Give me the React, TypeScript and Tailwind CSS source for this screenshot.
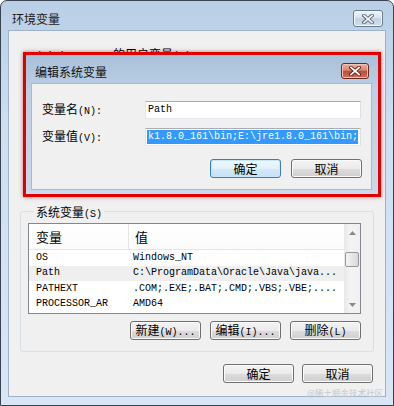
const ui = "font-['Liberation_Mono','Noto_Sans_CJK_SC',monospace]";
const cjk = "font-['Noto_Sans_CJK_SC','Liberation_Sans',sans-serif]";

// cjk text followed by a small half-width mnemonic part, like "新建(W)..."
function Lbl({ zh, en }: { zh: string; en?: string }) {
  return (
    <span className="whitespace-nowrap">
      <span className={`text-[12px] ${cjk}`}>{zh}</span>
      {en ? <span className={`text-[10px] ${ui}`}>{en}</span> : null}
    </span>
  );
}

function Btn({ children, primary = false }: { children: React.ReactNode; primary?: boolean }) {
  return (
    <div
      className={
        primary
          ? "flex h-[19px] w-[71px] items-center justify-center rounded-[3px] border border-[#3c7fb1] bg-[linear-gradient(#eef7fd_0%,#e2f1fb_50%,#d2e9f8_50%,#c4e2f6_100%)] leading-[12px] text-black shadow-[inset_0_0_0_1px_#c8e6fa]"
          : "flex h-[19px] w-[71px] items-center justify-center rounded-[3px] border border-[#707070] bg-[linear-gradient(#f3f3f3_0%,#ebebeb_50%,#dddddd_50%,#cfcfcf_100%)] leading-[12px] text-black shadow-[inset_0_0_0_1px_#fbfbfb]"
      }
    >
      {children}
    </div>
  );
}

function CloseX({ red = false }: { red?: boolean }) {
  return (
    <svg width="12" height="10" viewBox="0 0 12 10">
      <path d="M2 1.5 L10 8.5 M10 1.5 L2 8.5" stroke={red ? "#5a1a12" : "#55606c"} strokeWidth="3.6" strokeLinecap="square" />
      <path d="M2 1.5 L10 8.5 M10 1.5 L2 8.5" stroke={red ? "#ffffff" : "#eef2f6"} strokeWidth="1.8" strokeLinecap="square" />
    </svg>
  );
}

const rows = [
  ["OS", "Windows_NT"],
  ["Path", "C:\\ProgramData\\Oracle\\Java\\java..."],
  ["PATHEXT", ".COM;.EXE;.BAT;.CMD;.VBS;.VBE;...."],
  ["PROCESSOR_AR", "AMD64"],
];

export default function App() {
  return (
    <div className="relative h-[406px] w-[394px] overflow-hidden bg-white">
      {/* 环境变量 window */}
      <div className="flex h-full flex-col rounded-t-[7px] border border-[#3a4250] bg-[linear-gradient(#b9cfe6_0%,#cddff1_30%,#d8e6f5_100%)] px-[7px] pb-[8px]">
        <div className="flex h-[29px] items-start">
          <div className={`ml-[4px] mt-[12px] text-[12px] leading-[12px] text-[#1a1a1a] ${cjk}`}>环境变量</div>
          <div className="ml-auto mr-[3px] mt-[9px] flex h-[17px] w-[30px] items-center justify-center rounded-[3px] border border-[#6a7a8e] bg-[linear-gradient(#eef3f8_0%,#d6e1ec_50%,#c3d2e2_50%,#cfdcea_100%)] shadow-[inset_0_0_0_1px_#f4f7fb]">
            <CloseX />
          </div>
        </div>

        <div className="flex flex-1 flex-col border border-[#9eb1c6] bg-[#f0f0f0] px-[11px]">
          {/* user variables label; the rest of that group sits under the dialog */}
          <div className="mt-[16px] h-[6px] overflow-hidden pl-[9px] leading-[12px] text-black">
            <span className={`text-[10px] ${ui}`}>Administrator </span>
            <Lbl zh="的用户变量" en="(U)" />
          </div>

          <fieldset className="mt-[152px] rounded-[3px] border border-[#d5dfe5] pb-[11px] pl-[7px] pr-[12px] pt-[6px]">
            <legend className="ml-[6px] h-[12px] px-[2px] leading-[12px] text-black">
              <Lbl zh="系统变量" en="(S)" />
            </legend>

            <div className="flex h-[91px] overflow-hidden border border-[#828790] bg-white">
              <div className="flex flex-1 flex-col">
                <div className="flex h-[26px] shrink-0 items-center border-b border-[#e5e5e5] bg-[linear-gradient(#ffffff,#fbfbfb)]">
                  <div className={`w-[100px] self-stretch border-r border-[#e5e5e5] pl-[7px] pt-[6px] text-[13px] leading-[13px] text-black ${cjk}`}>变量</div>
                  <div className={`pl-[6px] text-[13px] leading-[13px] text-black ${cjk}`}>值</div>
                </div>
                {rows.map(([k, v]) => (
                  <div
                    key={k}
                    className={
                      k === "Path"
                        ? `flex h-[15.5px] shrink-0 items-center bg-[#efefef] text-[10px] leading-[12px] text-black ${ui}`
                        : `flex h-[15.5px] shrink-0 items-center text-[10px] leading-[12px] text-black ${ui}`
                    }
                  >
                    <div className="w-[104px] pl-[7px]">{k}</div>
                    <div className="whitespace-nowrap">{v}</div>
                  </div>
                ))}
              </div>
              <div className="flex w-[16px] flex-col bg-[linear-gradient(90deg,#e8e8e8,#f4f4f4_40%,#f0f0f0)]">
                <div className="flex h-[17px] items-center justify-center">
                  <svg width="7" height="4" viewBox="0 0 7 4"><path d="M0 4 L3.5 0 L7 4 Z" fill="#8a8a8a" /></svg>
                </div>
                <div className="flex-1">
                  <div className="mx-[1px] mt-[11px] h-[15px] rounded-[2px] border border-[#979797] bg-[linear-gradient(90deg,#f4f4f4,#e6e6e6_50%,#d9d9d9)]" />
                </div>
                <div className="flex h-[17px] items-center justify-center">
                  <svg width="7" height="4" viewBox="0 0 7 4"><path d="M0 0 L3.5 4 L7 0 Z" fill="#8a8a8a" /></svg>
                </div>
              </div>
            </div>

            <div className="mt-[7px] flex justify-end gap-[9px]">
              <Btn><Lbl zh="新建" en="(W)..." /></Btn>
              <Btn><Lbl zh="编辑" en="(I)..." /></Btn>
              <Btn><Lbl zh="删除" en="(L)" /></Btn>
            </div>
          </fieldset>

          <div className="mt-[12px] flex justify-end gap-[8px] pr-[1px]">
            <Btn><Lbl zh="确定" /></Btn>
            <Btn><Lbl zh="取消" /></Btn>
          </div>
        </div>
      </div>

      {/* 编辑系统变量 dialog, highlighted in red */}
      <div className="absolute left-[23px] top-[52px] h-[145px] w-[358px] border-[3px] border-[#e00000] shadow-[0_0_4px_rgba(120,0,0,0.5)]">
        <div className="flex h-full flex-col bg-[linear-gradient(#a9c0d9_0%,#bcd0e6_25%,#c9daec_100%)] pb-[4px] pl-[5px] pr-[6px]">
          <div className="flex h-[28px] shrink-0 items-start">
            <div className={`ml-[4px] mt-[11px] text-[12px] leading-[12px] text-[#111] ${cjk}`}>编辑系统变量</div>
            <div className="ml-auto mr-[3px] mt-[8px] flex h-[16px] w-[28px] items-center justify-center rounded-[3px] border border-[#6e2a20] bg-[linear-gradient(#eab0a2_0%,#d98672_45%,#c24a33_50%,#d2705a_100%)] shadow-[inset_0_0_0_1px_#f2c4b8]">
              <CloseX red />
            </div>
          </div>
          <div className="flex flex-1 flex-col border border-[#a7b9cc] bg-[#f0f0f0] pl-[10px] pr-[9px]">
            <div className="mt-[17px] flex items-center">
              <div className="w-[103px] leading-[12px] text-black"><Lbl zh="变量名" en="(N):" /></div>
              <div className={`flex h-[18px] w-[216px] items-center border border-[#abadb3] border-b-[#e3e9ef] border-r-[#dbdfe6] border-l-[#e2e3ea] bg-white pl-[2px] text-[10px] leading-[12px] text-black ${ui}`}>Path</div>
            </div>
            <div className="mt-[9px] flex items-center">
              <div className="w-[103px] leading-[12px] text-black"><Lbl zh="变量值" en="(V):" /></div>
              <div className={`flex h-[18px] w-[216px] items-center overflow-hidden border border-[#abadb3] border-b-[#e3e9ef] border-r-[#dbdfe6] border-l-[#e2e3ea] bg-white pl-[1px] text-[10px] leading-[12px] ${ui}`}>
                <span className="whitespace-nowrap bg-[#3399ff] py-[1px] pl-[1px] text-white">k1.8.0_161\bin;E:\jre1.8.0_161\bin;</span>
              </div>
            </div>
            <div className="mt-[13px] flex justify-end gap-[10px]">
              <Btn primary><Lbl zh="确定" /></Btn>
              <Btn><Lbl zh="取消" /></Btn>
            </div>
          </div>
        </div>
      </div>

      <div className={`absolute bottom-[9px] right-[11px] text-[8.5px] leading-[10px] text-[#c4c8cc] ${cjk}`}>@稀土掘金技术社区</div>
    </div>
  );
}
